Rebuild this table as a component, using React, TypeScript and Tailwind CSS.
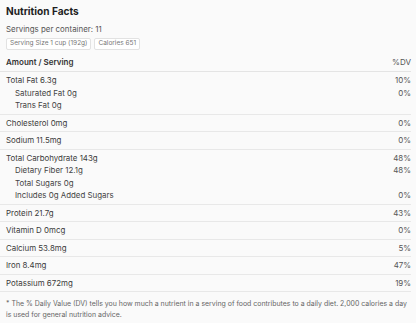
const groups: { name: string; dv?: string; sub?: boolean }[][] = [
  [
    { name: "Total Fat 6.3g", dv: "10%" },
    { name: "Saturated Fat 0g", dv: "0%", sub: true },
    { name: "Trans Fat 0g", sub: true },
  ],
  [{ name: "Cholesterol 0mg", dv: "0%" }],
  [{ name: "Sodium 11.5mg", dv: "0%" }],
  [
    { name: "Total Carbohydrate 143g", dv: "48%" },
    { name: "Dietary Fiber 12.1g", dv: "48%", sub: true },
    { name: "Total Sugars 0g", sub: true },
    { name: "Includes 0g Added Sugars", dv: "0%", sub: true },
  ],
  [{ name: "Protein 21.7g", dv: "43%" }],
  [{ name: "Vitamin D 0mcg", dv: "0%" }],
  [{ name: "Calcium 53.8mg", dv: "5%" }],
  [{ name: "Iron 8.4mg", dv: "47%" }],
  [{ name: "Potassium 672mg", dv: "19%" }],
];

export default function App() {
  return (
    <div className="w-[416px] h-[323px] overflow-hidden bg-[#fafafa] text-[#333] font-['Inter',sans-serif]">
      <div className="pt-[4px] pl-[6px] pr-[6px]">
        <h1 className="text-[10.1px] leading-[14px] font-bold text-[#1f1f1f]">Nutrition Facts</h1>
        <p className="mt-[5px] text-[7.9px] leading-[12px] text-[#555]">Servings per container: 11</p>
        <div className="mt-[2.5px] flex gap-[3px]">
          <span className="h-[12.5px] flex items-center px-[3px] rounded-[2px] border border-[#e2e2e2] bg-white text-[6.5px] text-[#777]">
            Serving Size 1 cup (192g)
          </span>
          <span className="h-[12.5px] flex items-center px-[3px] rounded-[2px] border border-[#e2e2e2] bg-white text-[6.5px] text-[#777]">
            Calories 651
          </span>
        </div>
      </div>
      <div className="mr-[5px]">
        <div className="mt-[6px] pl-[6px] pb-[3px] flex justify-between border-b border-[#e4e4e4] text-[8px] leading-[12px] font-semibold text-[#333]">
          <span>Amount / Serving</span>
          <span className="font-normal text-[#555]">%DV</span>
        </div>
        {groups.map((g, i) => (
          <div key={i} className="py-[2px] pl-[6px] border-b border-[#e8e8e8]">
            {g.map((r) => (
              <div key={r.name} className="flex justify-between text-[7.9px] leading-[12.5px]">
                <span className={r.sub ? "pl-[9px] text-[#444]" : "text-[#3a3a3a]"}>{r.name}</span>
                <span className="text-[#555]">{r.dv}</span>
              </div>
            ))}
          </div>
        ))}
      </div>
      <p className="mt-[6px] px-[6px] text-[6.95px] leading-[11px] text-[#666] whitespace-nowrap">
        * The % Daily Value (DV) tells you how much a nutrient in a serving of food contributes to a daily diet. 2,000 calories a day
        <br />
        is used for general nutrition advice.
      </p>
    </div>
  );
}
